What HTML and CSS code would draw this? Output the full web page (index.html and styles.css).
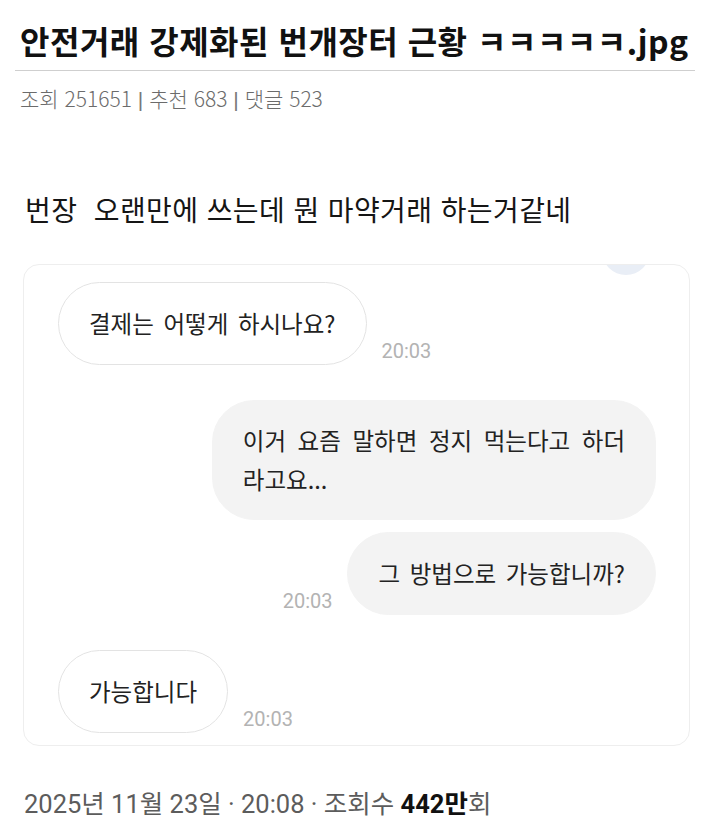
FILE: index.html
```html
<!DOCTYPE html>
<html lang="ko">
<head>
<meta charset="utf-8">
<title>안전거래 강제화된 번개장터 근황</title>
<link rel="stylesheet" href="styles.css">
</head>
<body>
<div class="page">
  <h1 class="title">안전거래 강제화된 번개장터 근황 ㅋㅋㅋㅋㅋ.jpg</h1>
  <hr class="rule">
  <div class="meta">조회 251651 <span class="sep">|</span> 추천 683 <span class="sep">|</span> 댓글 523</div>
  <p class="body-text">번장&nbsp; 오랜만에 쓰는데 뭔 마약거래 하는거같네</p>
  <div class="chat">
    <div class="deco"></div>
    <div class="row recv">
      <div class="bubble in">결제는 어떻게 하시나요?</div>
      <span class="time">20:03</span>
    </div>
    <div class="row sent gap-big">
      <div class="bubble out multi">이거 요즘 말하면 정지 먹는다고 하더<br>라고요...</div>
    </div>
    <div class="row sent gap-small">
      <span class="time">20:03</span>
      <div class="bubble out">그 방법으로 가능합니까?</div>
    </div>
    <div class="row recv gap-big">
      <div class="bubble in">가능합니다</div>
      <span class="time">20:03</span>
    </div>
  </div>
  <div class="footer">2025년 11월 23일 · 20:08 · 조회수 <b>442만</b>회</div>
</div>
</body>
</html>
```

FILE: styles.css
```css
html, body {
  margin: 0;
  padding: 0;
  background: #ffffff;
}

.page {
  padding: 0 19px 0 15px;
  font-family: "Noto Sans CJK KR", "Noto Sans", sans-serif;
  color: #111;
}

.title {
  margin: 20px 0 0 5px;
  font-size: 32px;
  line-height: 40px;
  font-weight: 700;
  letter-spacing: 0.5px;
  color: #111;
  white-space: nowrap;
}

.rule {
  margin: 10px 0 0 0;
  border: 0;
  height: 1px;
  background: #cfcfcf;
}

.meta {
  margin: 13px 0 0 5px;
  font-size: 21px;
  line-height: 28px;
  font-weight: 300;
  color: #6b6b6b;
}

.sep {
  font-family: "Liberation Sans", sans-serif;
  font-weight: 400;
  color: #777;
}

.body-text {
  margin: 77px 0 0 10px;
  font-size: 28px;
  line-height: 36px;
  letter-spacing: 0.4px;
  color: #151515;
}

.chat {
  position: relative;
  overflow: hidden;
  margin: 37px 5px 0 8px;
  padding: 17px 33px 12px 34px;
  border: 1px solid #eeeeee;
  border-radius: 16px;
  display: flex;
  flex-direction: column;
  font-size: 23.5px;
  color: #222;
}

.deco {
  position: absolute;
  top: -38px;
  left: 578px;
  width: 48px;
  height: 48px;
  border-radius: 50%;
  background: #e9eef6;
}

.row {
  display: flex;
  align-items: flex-end;
  gap: 15px;
}

.row.sent {
  justify-content: flex-end;
}

.gap-big {
  margin-top: 35px;
}

.gap-small {
  margin-top: 12px;
}

.bubble {
  padding: 21px 30px;
  line-height: 39px;
  border-radius: 42px;
  word-spacing: 3px;
  white-space: nowrap;
}

.bubble.multi {
  padding: 20px 30px;
  word-spacing: 5px;
}

.bubble.in {
  border: 1px solid #e3e3e3;
  background: #ffffff;
}

.bubble.out {
  border: 1px solid #f3f3f3;
  background: #f3f3f3;
}

.time {
  font-family: Roboto, "Noto Sans CJK KR", sans-serif;
  font-size: 20px;
  line-height: 20px;
  color: #b3b3b3;
  margin-bottom: 4px;
}

.footer {
  margin: 45px 0 0 9px;
  font-family: Roboto, "Noto Sans CJK KR", sans-serif;
  font-size: 25.5px;
  line-height: 26px;
  color: #5c5c5c;
  white-space: nowrap;
}

.footer b {
  font-weight: 700;
  color: #111;
}
```
